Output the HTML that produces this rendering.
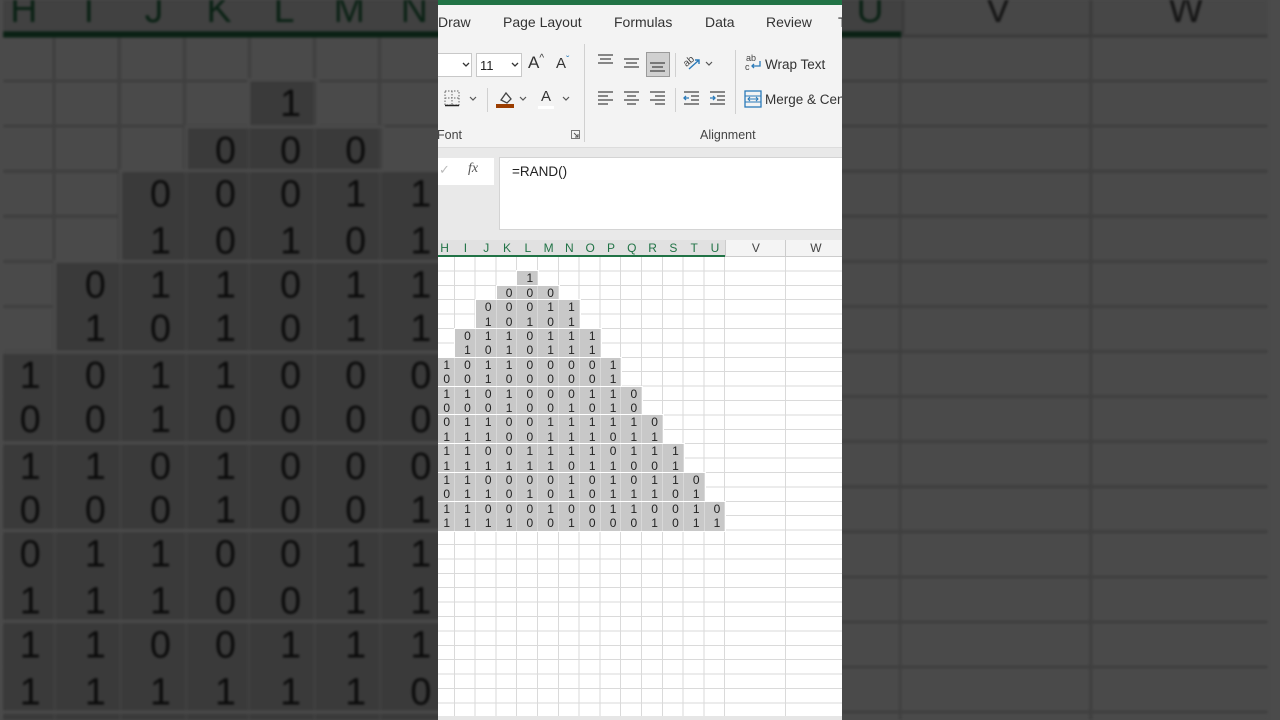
<!DOCTYPE html>
<html><head><meta charset="utf-8"><style>
*{margin:0;padding:0;box-sizing:border-box}
html,body{width:1280px;height:720px;overflow:hidden}
body{background:#4b4b4b;font-family:"Liberation Sans",sans-serif;position:relative}
.bg{position:absolute;left:0;top:0;width:1280px;height:720px;overflow:hidden;filter:brightness(0.29) blur(1.2px)}
.bgin{position:absolute;left:0;top:0;width:1280px;height:720px;transform-origin:0 0;transform:scale(3.13) translate(-437px,-245px)}
.grid{position:absolute;left:438px;top:240px;width:404px;height:480px;overflow:hidden;background:#fff}
.hdr{position:absolute;top:0;height:17px;font-size:12px;line-height:17px;text-align:center}
.lines{position:absolute;left:0;top:17px;width:404px;height:463px;background:repeating-linear-gradient(to bottom,transparent 0 13.4px,#dadada 13.4px 14.4px)}
.vl{position:absolute;top:17px;left:-3.8px;width:291.2px;height:463px;background:repeating-linear-gradient(to right,transparent 0 19.8px,#dadada 19.8px 20.8px)}
.blk{position:absolute;background:#c8c8c8;outline:1px solid #fff;font-size:12px;color:#222;white-space:nowrap}
.r{height:14.4px;line-height:14.4px}
.r span{display:inline-block;width:20.8px;text-align:right;padding-right:4px;border-right:1px solid #d8d8d8}
.c{position:absolute;left:438px;top:0;width:404px;height:240px;background:#f3f3f3;overflow:hidden}
.tab{position:absolute;top:14px;font-size:14px;color:#333}
.lbl{position:absolute;top:128px;font-size:12.5px;color:#444}
</style></head><body>

<div class="bg"><div class="bgin">
<div class="grid">
 <div class="hdr" style="left:-3.8px;width:291.2px;background:#e1e1e1;color:#217346;border-bottom:2px solid #217346;display:flex"><span style="width:20.8px">H</span><span style="width:20.8px">I</span><span style="width:20.8px">J</span><span style="width:20.8px">K</span><span style="width:20.8px">L</span><span style="width:20.8px">M</span><span style="width:20.8px">N</span><span style="width:20.8px">O</span><span style="width:20.8px">P</span><span style="width:20.8px">Q</span><span style="width:20.8px">R</span><span style="width:20.8px">S</span><span style="width:20.8px">T</span><span style="width:20.8px">U</span></div>
 <div class="hdr" style="left:287.4px;width:120px;background:#f4f4f4;color:#444;display:flex;border-bottom:1px solid #ccc"><span style="width:60px;border-left:1px solid #ccc">V</span><span style="width:60px;border-left:1px solid #ccc">W</span></div>
 <div class="lines"></div><div class="vl"></div>
 <div style="position:absolute;left:347.4px;top:17px;width:1px;height:463px;background:#dadada"></div>
 <div style="position:absolute;left:407.4px;top:17px;width:1px;height:463px;background:#dadada"></div>
 <div class="blk" style="left:79.4px;top:31.4px"><div class="r"><span>1</span></div></div>
 <div class="blk" style="left:58.6px;top:45.8px"><div class="r"><span>0</span><span>0</span><span>0</span></div></div>
 <div class="blk" style="left:37.8px;top:60.2px"><div class="r"><span>0</span><span>0</span><span>0</span><span>1</span><span>1</span></div><div class="r"><span>1</span><span>0</span><span>1</span><span>0</span><span>1</span></div></div>
 <div class="blk" style="left:17px;top:89px"><div class="r"><span>0</span><span>1</span><span>1</span><span>0</span><span>1</span><span>1</span><span>1</span></div><div class="r"><span>1</span><span>0</span><span>1</span><span>0</span><span>1</span><span>1</span><span>1</span></div></div>
 <div class="blk" style="left:-3.8px;top:117.8px"><div class="r"><span>1</span><span>0</span><span>1</span><span>1</span><span>0</span><span>0</span><span>0</span><span>0</span><span>1</span></div><div class="r"><span>0</span><span>0</span><span>1</span><span>0</span><span>0</span><span>0</span><span>0</span><span>0</span><span>1</span></div></div>
 <div class="blk" style="left:-24.6px;top:146.6px"><div class="r"><span></span><span>1</span><span>1</span><span>0</span><span>1</span><span>0</span><span>0</span><span>0</span><span>1</span><span>1</span><span>0</span></div><div class="r"><span></span><span>0</span><span>0</span><span>0</span><span>1</span><span>0</span><span>0</span><span>1</span><span>0</span><span>1</span><span>0</span></div></div>
 <div class="blk" style="left:-24.6px;top:175.4px"><div class="r"><span></span><span>0</span><span>1</span><span>1</span><span>0</span><span>0</span><span>1</span><span>1</span><span>1</span><span>1</span><span>1</span><span>0</span></div><div class="r"><span></span><span>1</span><span>1</span><span>1</span><span>0</span><span>0</span><span>1</span><span>1</span><span>1</span><span>0</span><span>1</span><span>1</span></div></div>
 <div class="blk" style="left:-24.6px;top:204.2px"><div class="r"><span></span><span>1</span><span>1</span><span>0</span><span>0</span><span>1</span><span>1</span><span>1</span><span>1</span><span>0</span><span>1</span><span>1</span><span>1</span></div><div class="r"><span></span><span>1</span><span>1</span><span>1</span><span>1</span><span>1</span><span>1</span><span>0</span><span>1</span><span>1</span><span>0</span><span>0</span><span>1</span></div></div>
 <div class="blk" style="left:-24.6px;top:233px"><div class="r"><span></span><span>1</span><span>1</span><span>0</span><span>0</span><span>0</span><span>0</span><span>1</span><span>0</span><span>1</span><span>0</span><span>1</span><span>1</span><span>0</span></div><div class="r"><span></span><span>0</span><span>1</span><span>1</span><span>0</span><span>1</span><span>0</span><span>1</span><span>0</span><span>1</span><span>1</span><span>1</span><span>0</span><span>1</span></div></div>
 <div class="blk" style="left:-24.6px;top:261.8px"><div class="r"><span></span><span>1</span><span>1</span><span>0</span><span>0</span><span>0</span><span>1</span><span>0</span><span>0</span><span>1</span><span>1</span><span>0</span><span>0</span><span>1</span><span>0</span></div><div class="r"><span></span><span>1</span><span>1</span><span>1</span><span>1</span><span>0</span><span>0</span><span>1</span><span>0</span><span>0</span><span>0</span><span>1</span><span>0</span><span>1</span><span>1</span></div></div>
</div>
</div></div>

<div class="grid">
 <div class="hdr" style="left:-3.8px;width:291.2px;background:#e1e1e1;color:#217346;border-bottom:2px solid #217346;display:flex"><span style="width:20.8px">H</span><span style="width:20.8px">I</span><span style="width:20.8px">J</span><span style="width:20.8px">K</span><span style="width:20.8px">L</span><span style="width:20.8px">M</span><span style="width:20.8px">N</span><span style="width:20.8px">O</span><span style="width:20.8px">P</span><span style="width:20.8px">Q</span><span style="width:20.8px">R</span><span style="width:20.8px">S</span><span style="width:20.8px">T</span><span style="width:20.8px">U</span></div>
 <div class="hdr" style="left:287.4px;width:120px;background:#f4f4f4;color:#444;display:flex;border-bottom:1px solid #ccc"><span style="width:60px;border-left:1px solid #ccc">V</span><span style="width:60px;border-left:1px solid #ccc">W</span></div>
 <div class="lines"></div><div class="vl"></div>
 <div style="position:absolute;left:347.4px;top:17px;width:1px;height:463px;background:#dadada"></div>
 <div style="position:absolute;left:407.4px;top:17px;width:1px;height:463px;background:#dadada"></div>
 <div class="blk" style="left:79.4px;top:31.4px"><div class="r"><span>1</span></div></div>
 <div class="blk" style="left:58.6px;top:45.8px"><div class="r"><span>0</span><span>0</span><span>0</span></div></div>
 <div class="blk" style="left:37.8px;top:60.2px"><div class="r"><span>0</span><span>0</span><span>0</span><span>1</span><span>1</span></div><div class="r"><span>1</span><span>0</span><span>1</span><span>0</span><span>1</span></div></div>
 <div class="blk" style="left:17px;top:89px"><div class="r"><span>0</span><span>1</span><span>1</span><span>0</span><span>1</span><span>1</span><span>1</span></div><div class="r"><span>1</span><span>0</span><span>1</span><span>0</span><span>1</span><span>1</span><span>1</span></div></div>
 <div class="blk" style="left:-3.8px;top:117.8px"><div class="r"><span>1</span><span>0</span><span>1</span><span>1</span><span>0</span><span>0</span><span>0</span><span>0</span><span>1</span></div><div class="r"><span>0</span><span>0</span><span>1</span><span>0</span><span>0</span><span>0</span><span>0</span><span>0</span><span>1</span></div></div>
 <div class="blk" style="left:-24.6px;top:146.6px"><div class="r"><span></span><span>1</span><span>1</span><span>0</span><span>1</span><span>0</span><span>0</span><span>0</span><span>1</span><span>1</span><span>0</span></div><div class="r"><span></span><span>0</span><span>0</span><span>0</span><span>1</span><span>0</span><span>0</span><span>1</span><span>0</span><span>1</span><span>0</span></div></div>
 <div class="blk" style="left:-24.6px;top:175.4px"><div class="r"><span></span><span>0</span><span>1</span><span>1</span><span>0</span><span>0</span><span>1</span><span>1</span><span>1</span><span>1</span><span>1</span><span>0</span></div><div class="r"><span></span><span>1</span><span>1</span><span>1</span><span>0</span><span>0</span><span>1</span><span>1</span><span>1</span><span>0</span><span>1</span><span>1</span></div></div>
 <div class="blk" style="left:-24.6px;top:204.2px"><div class="r"><span></span><span>1</span><span>1</span><span>0</span><span>0</span><span>1</span><span>1</span><span>1</span><span>1</span><span>0</span><span>1</span><span>1</span><span>1</span></div><div class="r"><span></span><span>1</span><span>1</span><span>1</span><span>1</span><span>1</span><span>1</span><span>0</span><span>1</span><span>1</span><span>0</span><span>0</span><span>1</span></div></div>
 <div class="blk" style="left:-24.6px;top:233px"><div class="r"><span></span><span>1</span><span>1</span><span>0</span><span>0</span><span>0</span><span>0</span><span>1</span><span>0</span><span>1</span><span>0</span><span>1</span><span>1</span><span>0</span></div><div class="r"><span></span><span>0</span><span>1</span><span>1</span><span>0</span><span>1</span><span>0</span><span>1</span><span>0</span><span>1</span><span>1</span><span>1</span><span>0</span><span>1</span></div></div>
 <div class="blk" style="left:-24.6px;top:261.8px"><div class="r"><span></span><span>1</span><span>1</span><span>0</span><span>0</span><span>0</span><span>1</span><span>0</span><span>0</span><span>1</span><span>1</span><span>0</span><span>0</span><span>1</span><span>0</span></div><div class="r"><span></span><span>1</span><span>1</span><span>1</span><span>1</span><span>0</span><span>0</span><span>1</span><span>0</span><span>0</span><span>0</span><span>1</span><span>0</span><span>1</span><span>1</span></div></div>
 <div style="position:absolute;left:0;top:476px;width:404px;height:4px;background:#e6e6e6"></div>
</div>

<div class="c">
 <div style="position:absolute;left:0;top:0;width:404px;height:5px;background:#217346"></div>
 <div class="tab" style="left:0">Draw</div>
 <div class="tab" style="left:65px">Page Layout</div>
 <div class="tab" style="left:176px">Formulas</div>
 <div class="tab" style="left:267px">Data</div>
 <div class="tab" style="left:328px">Review</div>
 <div class="tab" style="left:400px">T</div>
 <div style="position:absolute;left:-2px;top:53px;width:36px;height:24px;background:#fff;border:1px solid #c8c8c8"></div>
 <svg style="position:absolute;left:24px;top:62px" width="8" height="6"><path d="M1 1l3 3 3-3" stroke="#333" fill="none" stroke-width="1.3"/></svg>
 <div style="position:absolute;left:38px;top:53px;width:46px;height:24px;background:#fff;border:1px solid #c8c8c8;font-size:13px;padding:4px 0 0 3px;color:#222">11</div>
 <svg style="position:absolute;left:73px;top:62px" width="8" height="6"><path d="M1 1l3 3 3-3" stroke="#333" fill="none" stroke-width="1.3"/></svg>
 <div style="position:absolute;left:90px;top:53px;font-size:17px;color:#333">A<span style="font-size:10px;vertical-align:top">^</span></div>
 <div style="position:absolute;left:118px;top:55px;font-size:15px;color:#333">A<span style="font-size:10px;color:#2a7ab9;vertical-align:top">ˇ</span></div>
 <svg style="position:absolute;left:6px;top:90px" width="16" height="17"><rect x="1" y="1" width="14" height="14" fill="none" stroke="#666" stroke-dasharray="1.5 1.5"/><path d="M8 1v14M1 8h14" stroke="#666" stroke-dasharray="1.5 1.5"/><path d="M1 15.5h14" stroke="#222" stroke-width="1.5"/></svg>
 <svg style="position:absolute;left:31px;top:96px" width="8" height="6"><path d="M1 1l3 3 3-3" stroke="#555" fill="none" stroke-width="1.2"/></svg>
 <div style="position:absolute;left:49px;top:88px;width:1px;height:24px;background:#d0d0d0"></div>
 <svg style="position:absolute;left:58px;top:89px" width="18" height="20"><path d="M5 11l5-7 5 6-4 4z" fill="none" stroke="#444" stroke-width="1.3"/><rect x="0" y="15" width="18" height="4" fill="#9b3d00"/></svg>
 <svg style="position:absolute;left:81px;top:96px" width="8" height="6"><path d="M1 1l3 3 3-3" stroke="#555" fill="none" stroke-width="1.2"/></svg>
 <div style="position:absolute;left:103px;top:88px;font-size:15px;color:#333">A</div>
 <div style="position:absolute;left:100px;top:106px;width:16px;height:3px;background:#fff"></div>
 <svg style="position:absolute;left:124px;top:96px" width="8" height="6"><path d="M1 1l3 3 3-3" stroke="#555" fill="none" stroke-width="1.2"/></svg>
 <div class="lbl" style="left:-1px">Font</div>
 <svg style="position:absolute;left:133px;top:130px" width="9" height="9"><path d="M0.5 0.5h8v8h-8z" fill="none" stroke="#777"/><path d="M3 3l4 4M7 4v3h-3" stroke="#555" fill="none"/></svg>
 <div style="position:absolute;left:146px;top:44px;width:1px;height:98px;background:#d0d0d0"></div>
 <svg style="position:absolute;left:159px;top:54px" width="18" height="14"><path d="M1 1h15M3 5h11M1 9h15" stroke="#444" stroke-width="1.3"/></svg>
 <svg style="position:absolute;left:185px;top:57px" width="18" height="14"><path d="M1 2h15M3 6h11M1 10h15" stroke="#444" stroke-width="1.3"/></svg>
 <div style="position:absolute;left:208px;top:52px;width:24px;height:25px;background:#d0d0d0;border:1px solid #9a9a9a"></div>
 <svg style="position:absolute;left:211px;top:60px" width="18" height="14"><path d="M1 3h15M3 7h11M1 11h15" stroke="#444" stroke-width="1.3"/></svg>
 <div style="position:absolute;left:237px;top:53px;width:1px;height:24px;background:#d0d0d0"></div>
 <svg style="position:absolute;left:245px;top:53px" width="20" height="20"><text x="0" y="11" font-size="10" fill="#444" transform="rotate(-40 6 8)" font-family="Liberation Sans">ab</text><path d="M6 16l10-9M12 7h4v4" stroke="#2a7ab9" fill="none" stroke-width="1.4"/></svg>
 <svg style="position:absolute;left:267px;top:61px" width="8" height="6"><path d="M1 1l3 3 3-3" stroke="#555" fill="none" stroke-width="1.2"/></svg>
 <svg style="position:absolute;left:159px;top:91px" width="18" height="16"><path d="M1 1h15M1 5h10M1 9h15M1 13h10" stroke="#444" stroke-width="1.3"/></svg>
 <svg style="position:absolute;left:185px;top:91px" width="18" height="16"><path d="M1 1h15M4 5h9M1 9h15M4 13h9" stroke="#444" stroke-width="1.3"/></svg>
 <svg style="position:absolute;left:211px;top:91px" width="18" height="16"><path d="M1 1h15M6 5h10M1 9h15M6 13h10" stroke="#444" stroke-width="1.3"/></svg>
 <div style="position:absolute;left:237px;top:88px;width:1px;height:24px;background:#d0d0d0"></div>
 <svg style="position:absolute;left:245px;top:91px" width="18" height="16"><path d="M1 1h15M8 5h8M8 9h8M1 13h15" stroke="#444" stroke-width="1.3"/><path d="M6 7H1M3 5L1 7l2 2" stroke="#2a7ab9" fill="none" stroke-width="1.3"/></svg>
 <svg style="position:absolute;left:271px;top:91px" width="18" height="16"><path d="M1 1h15M8 5h8M8 9h8M1 13h15" stroke="#444" stroke-width="1.3"/><path d="M1 7h5M4 5l2 2-2 2" stroke="#2a7ab9" fill="none" stroke-width="1.3"/></svg>
 <div style="position:absolute;left:297px;top:50px;width:1px;height:64px;background:#d0d0d0"></div>
 <div class="lbl" style="left:262px">Alignment</div>
 <svg style="position:absolute;left:307px;top:53px" width="18" height="20"><text x="1" y="8" font-size="9" fill="#444" font-family="Liberation Sans">ab</text><text x="0" y="17" font-size="9" fill="#444" font-family="Liberation Sans">c</text><path d="M15 8v5H7M9 11l-2 2 2 2" stroke="#2a7ab9" fill="none" stroke-width="1.3"/></svg>
 <div style="position:absolute;left:327px;top:57px;font-size:13.5px;color:#333">Wrap Text</div>
 <svg style="position:absolute;left:306px;top:90px" width="18" height="18"><rect x="1" y="1" width="16" height="16" fill="none" stroke="#2a7ab9" stroke-width="1.3"/><path d="M1 6h16M1 12h16" stroke="#2a7ab9"/><path d="M4 9h10M6 7l-2 2 2 2M12 7l2 2-2 2" stroke="#2a7ab9" fill="none"/></svg>
 <div style="position:absolute;left:327px;top:92px;font-size:13.5px;color:#333;white-space:nowrap">Merge &amp; Center</div>
 <div style="position:absolute;left:0;top:147px;width:404px;height:93px;background:#e9e9e9;border-top:1px solid #dcdcdc"></div>
 <div style="position:absolute;left:-2px;top:158px;width:58px;height:27px;background:#fff"></div>
 <div style="position:absolute;left:1px;top:162px;font-size:13px;color:#bbb">✓</div>
 <div style="position:absolute;left:30px;top:161px;font-size:14px;font-style:italic;font-family:'Liberation Serif',serif;color:#555">fx</div>
 <div style="position:absolute;left:61px;top:157px;width:345px;height:73px;background:#fff;border:1px solid #d4d4d4"></div>
 <div style="position:absolute;left:74px;top:164px;font-size:13.5px;color:#222">=RAND()</div>
</div>
</body></html>
